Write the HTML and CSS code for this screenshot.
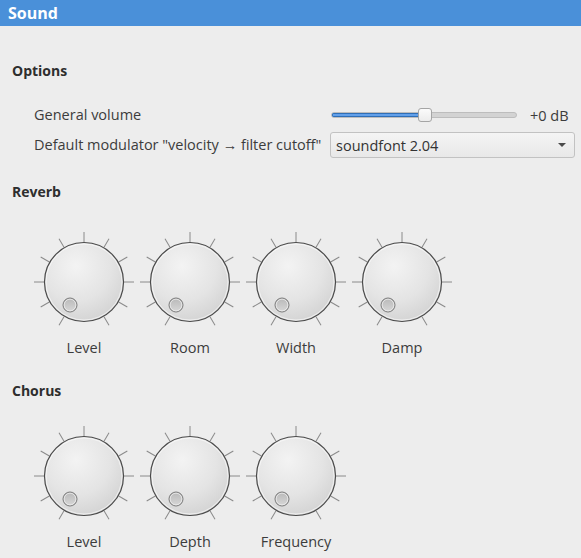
FILE: index.html
```html
<!DOCTYPE html>
<html>
<head>
<meta charset="utf-8">
<link rel="stylesheet" href="styles.css">
</head>
<body>
<header class="titlebar">Sound</header>
<main class="content">
  <h2 class="section options-title">Options</h2>
  <div class="options-grid">
    <div class="opt-label">General volume</div>
    <div class="slider-row">
      <div class="slider">
        <div class="track"><div class="fill" style="width:49%"></div></div>
        <div class="handle" style="left:47%"></div>
      </div>
      <span class="value">+0 dB</span>
    </div>
    <div class="opt-label">Default modulator "velocity → filter cutoff"</div>
    <div class="combo">
      <span>soundfont 2.04</span>
      <span class="arrow"></span>
    </div>
  </div>

  <h2 class="section reverb-title">Reverb</h2>
  <div class="knobs">
    <div class="knob"><svg width="102" height="102" viewBox="0 0 102 102"><use href="#knob"/></svg><span>Level</span></div>
    <div class="knob"><svg width="102" height="102" viewBox="0 0 102 102"><use href="#knob"/></svg><span>Room</span></div>
    <div class="knob"><svg width="102" height="102" viewBox="0 0 102 102"><use href="#knob"/></svg><span>Width</span></div>
    <div class="knob"><svg width="102" height="102" viewBox="0 0 102 102"><use href="#knob"/></svg><span>Damp</span></div>
  </div>

  <h2 class="section chorus-title">Chorus</h2>
  <div class="knobs chorus-knobs">
    <div class="knob"><svg width="102" height="102" viewBox="0 0 102 102"><use href="#knob"/></svg><span>Level</span></div>
    <div class="knob"><svg width="102" height="102" viewBox="0 0 102 102"><use href="#knob"/></svg><span>Depth</span></div>
    <div class="knob"><svg width="102" height="102" viewBox="0 0 102 102"><use href="#knob"/></svg><span>Frequency</span></div>
  </div>
</main>

<svg class="defs" width="0" height="0">
  <defs>
    <radialGradient id="kfill" cx="0.4" cy="0.3" r="0.8">
      <stop offset="0" stop-color="#f3f3f3"/>
      <stop offset="0.55" stop-color="#e4e4e4"/>
      <stop offset="1" stop-color="#cfcfcf"/>
    </radialGradient>
    <linearGradient id="dot" x1="0" y1="0" x2="0" y2="1">
      <stop offset="0" stop-color="#b8b8b8"/>
      <stop offset="1" stop-color="#d8d8d8"/>
    </linearGradient>
    <g id="knob">
      <g stroke="#8a8a8a" stroke-width="1">
        <line x1="51" y1="1" x2="51" y2="11"/>
        <line x1="51" y1="1" x2="51" y2="11" transform="rotate(30 51 51)"/>
        <line x1="51" y1="1" x2="51" y2="11" transform="rotate(60 51 51)"/>
        <line x1="51" y1="1" x2="51" y2="11" transform="rotate(90 51 51)"/>
        <line x1="51" y1="1" x2="51" y2="11" transform="rotate(120 51 51)"/>
        <line x1="51" y1="1" x2="51" y2="11" transform="rotate(150 51 51)"/>
        <line x1="51" y1="1" x2="51" y2="11" transform="rotate(-30 51 51)"/>
        <line x1="51" y1="1" x2="51" y2="11" transform="rotate(-60 51 51)"/>
        <line x1="51" y1="1" x2="51" y2="11" transform="rotate(-90 51 51)"/>
        <line x1="51" y1="1" x2="51" y2="11" transform="rotate(-120 51 51)"/>
        <line x1="51" y1="1" x2="51" y2="11" transform="rotate(-150 51 51)"/>
      </g>
      <circle cx="51" cy="51" r="39.5" fill="url(#kfill)" stroke="#4a4a4a" stroke-width="1.2"/>
      <circle cx="51" cy="51" r="38" fill="none" stroke="#ffffff" stroke-opacity="0.6" stroke-width="1"/>
      <circle cx="37" cy="74" r="7" fill="url(#dot)" stroke="#7a7a7a" stroke-width="1"/>
      <circle cx="37" cy="74" r="5.8" fill="none" stroke="#ececec" stroke-width="0.8"/>
    </g>
  </defs>
</svg>
</body>
</html>
```
FILE: styles.css
```css
html, body {
  margin: 0;
  padding: 0;
}
body {
  background: #ededed;
  font-family: "Open Sans", "Noto Sans", sans-serif;
  font-size: 14.5px;
  color: #3c3c3c;
  width: 581px;
  height: 558px;
  overflow: hidden;
}
.titlebar {
  background: #4a90d9;
  color: #ffffff;
  font-weight: 700;
  font-size: 16px;
  height: 26px;
  line-height: 26px;
  padding-left: 8px;
}
.content {
  padding: 0 6px 0 12px;
}
.section {
  margin: 0;
  font-size: 14px;
  font-weight: 700;
  color: #2e2e2e;
  line-height: 20px;
}
.options-title {
  margin-top: 35px;
}
.options-grid {
  display: grid;
  grid-template-columns: 296px 245px;
  row-gap: 4px;
  margin-top: 21px;
  padding-left: 22px;
  align-items: center;
}
.opt-label {
  line-height: 26px;
  white-space: nowrap;
}
.slider-row {
  display: flex;
  align-items: center;
  height: 26px;
}
.slider {
  position: relative;
  width: 186px;
  height: 14px;
  margin-left: 1px;
}
.track {
  position: absolute;
  left: 0;
  right: 0;
  top: 4px;
  height: 4px;
  border-radius: 3px;
  background: #d3d3d3;
  border: 1px solid #bdbdbd;
  overflow: hidden;
}
.fill {
  height: 100%;
  background: #62a0ea;
  box-shadow: inset 0 0 0 1px #2f6fb7;
}
.handle {
  position: absolute;
  top: 0;
  width: 12px;
  height: 12px;
  border-radius: 3px;
  background: linear-gradient(#fbfbfb, #ececec);
  border: 1px solid #a5a5a5;
}
.value {
  margin-left: 13px;
  color: #3c3c3c;
}
.combo {
  display: flex;
  justify-content: space-between;
  align-items: center;
  height: 24px;
  border: 1px solid #c2c2c2;
  border-radius: 3px;
  background: linear-gradient(#f4f4f4, #e8e8e8);
  padding: 0 8px 0 5px;
  color: #333;
}
.arrow {
  width: 0;
  height: 0;
  border-left: 4px solid transparent;
  border-right: 4px solid transparent;
  border-top: 4px solid #4a4a4a;
}
.reverb-title {
  margin-top: 24px;
}
.knobs {
  display: flex;
  margin-top: 29px;
  padding-left: 19px;
}
.chorus-knobs {
  margin-top: 24px;
}
.knob {
  width: 106px;
  display: flex;
  flex-direction: column;
  align-items: center;
}
.knob svg {
  display: block;
}
.knob span {
  margin-top: 5px;
  line-height: 20px;
  color: #3c3c3c;
}
.chorus-title {
  margin-top: 23px;
}
.defs {
  position: absolute;
}
```
